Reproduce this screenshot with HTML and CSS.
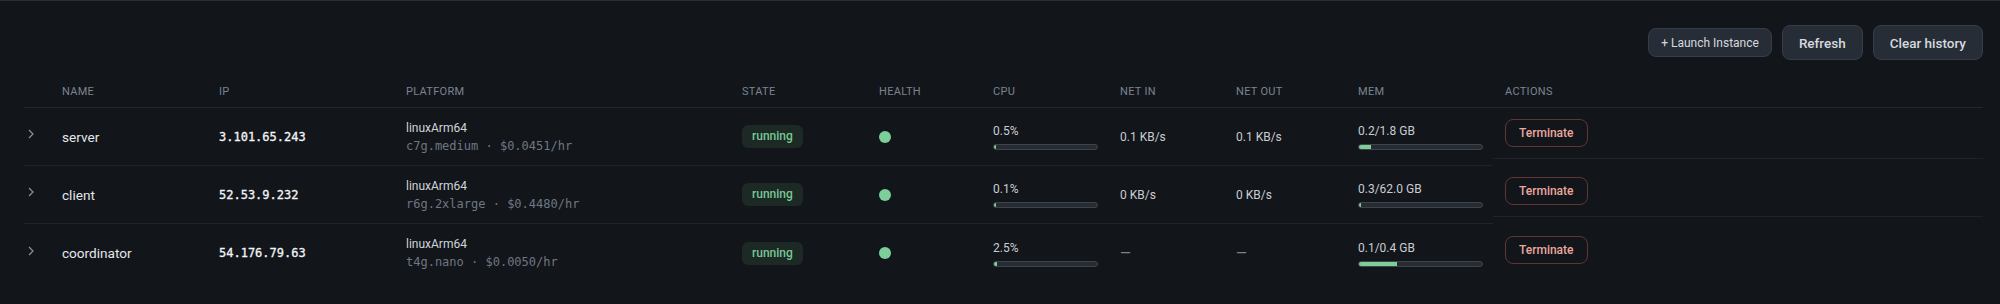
FILE: index.html
```html
<!DOCTYPE html>
<html lang="en">
<head>
  <meta charset="UTF-8">
  <title>Instances</title>
  <link rel="stylesheet" href="styles.css">
</head>
<body>

  <!-- toolbar -->
  <div class="toolbar">
    <button class="btn btn-small">+ Launch Instance</button>
    <button class="btn">Refresh</button>
    <button class="btn">Clear history</button>
  </div>

  <!-- instances table -->
  <div class="table">
    <div class="row head">
      <div class="cell"></div>
      <div class="cell">Name</div>
      <div class="cell">IP</div>
      <div class="cell">Platform</div>
      <div class="cell">State</div>
      <div class="cell">Health</div>
      <div class="cell">CPU</div>
      <div class="cell">Net In</div>
      <div class="cell">Net Out</div>
      <div class="cell">Mem</div>
      <div class="cell">Actions</div>
    </div>

    <div class="row">
      <div class="cell chev"><svg width="8" height="10" viewBox="0 0 8 10"><path d="M2 1l4 4-4 4" fill="none" stroke="#8a929c" stroke-width="1.2"/></svg></div>
      <div class="cell name">server</div>
      <div class="cell ip">3.101.65.243</div>
      <div class="cell platform"><span>linuxArm64</span><span class="sub">c7g.medium · $0.0451/hr</span></div>
      <div class="cell"><span class="badge">running</span></div>
      <div class="cell"><span class="dot"></span></div>
      <div class="cell stat"><span>0.5%</span><div class="bar cpu"><div class="fill" style="width: 0.5%"></div></div></div>
      <div class="cell val">0.1 KB/s</div>
      <div class="cell val">0.1 KB/s</div>
      <div class="cell stat"><span>0.2/1.8 GB</span><div class="bar mem"><div class="fill" style="width: 10%"></div></div></div>
      <div class="cell actions"><button class="terminate">Terminate</button></div>
    </div>

    <div class="row">
      <div class="cell chev"><svg width="8" height="10" viewBox="0 0 8 10"><path d="M2 1l4 4-4 4" fill="none" stroke="#8a929c" stroke-width="1.2"/></svg></div>
      <div class="cell name">client</div>
      <div class="cell ip">52.53.9.232</div>
      <div class="cell platform"><span>linuxArm64</span><span class="sub">r6g.2xlarge · $0.4480/hr</span></div>
      <div class="cell"><span class="badge">running</span></div>
      <div class="cell"><span class="dot"></span></div>
      <div class="cell stat"><span>0.1%</span><div class="bar cpu"><div class="fill" style="width: 0.1%"></div></div></div>
      <div class="cell val">0 KB/s</div>
      <div class="cell val">0 KB/s</div>
      <div class="cell stat"><span>0.3/62.0 GB</span><div class="bar mem"><div class="fill" style="width: 0.5%"></div></div></div>
      <div class="cell actions"><button class="terminate">Terminate</button></div>
    </div>

    <div class="row last">
      <div class="cell chev"><svg width="8" height="10" viewBox="0 0 8 10"><path d="M2 1l4 4-4 4" fill="none" stroke="#8a929c" stroke-width="1.2"/></svg></div>
      <div class="cell name">coordinator</div>
      <div class="cell ip">54.176.79.63</div>
      <div class="cell platform"><span>linuxArm64</span><span class="sub">t4g.nano · $0.0050/hr</span></div>
      <div class="cell"><span class="badge">running</span></div>
      <div class="cell"><span class="dot"></span></div>
      <div class="cell stat"><span>2.5%</span><div class="bar cpu"><div class="fill" style="width: 2.5%"></div></div></div>
      <div class="cell val dash">—</div>
      <div class="cell val dash">—</div>
      <div class="cell stat"><span>0.1/0.4 GB</span><div class="bar mem"><div class="fill" style="width: 31%"></div></div></div>
      <div class="cell actions"><button class="terminate">Terminate</button></div>
    </div>
  </div>

</body>
</html>
```

FILE: styles.css
```css
body {
  margin: 0;
  padding: 0 17px 0 24px;
  background: #12151a;
  border-top: 1px solid #2a2e35;
  font-family: Roboto, 'Liberation Sans', sans-serif;
  color: #e2e5e9;
  height: 303px;
  overflow: hidden;
}

.toolbar {
  display: flex;
  justify-content: flex-end;
  align-items: center;
  gap: 10px;
  padding-top: 24px;
  height: 35px;
}

.btn {
  height: 35px;
  padding: 0 16px;
  font-family: inherit;
  font-size: 13.5px;
  font-weight: 500;
  color: #d5d9df;
  background: #272d36;
  border: 1px solid #363d47;
  border-radius: 8px;
  cursor: pointer;
}

.btn-small {
  height: 29px;
  padding: 0 12px;
  font-size: 12px;
  font-weight: 400;
}

.row {
  display: grid;
  grid-template-columns: 26px 157px 187px 336px 137px 114px 127px 116px 122px 147px 1fr;
  height: 58px;
}

.cell {
  display: flex;
  align-items: center;
  padding-left: 12px;
  border-bottom: 1px solid #1e2329;
  font-size: 12px;
  min-width: 0;
}

.head {
  height: 48px;
}

.head .cell {
  align-items: flex-end;
  padding-bottom: 9px;
  font-size: 11px;
  line-height: 13px;
  letter-spacing: 0.3px;
  text-transform: uppercase;
  color: #7b8490;
  border-bottom-color: #22272e;
}

.row.last .cell {
  border-bottom: none;
}

.chev {
  padding-left: 3px;
}

.chev svg {
  margin-top: -5px;
}

.name {
  font-size: 13.6px;
  color: #e4e7ea;
}

.ip {
  font-family: 'DejaVu Sans Mono', 'Liberation Mono', monospace;
  font-size: 12px;
  color: #f2f4f6;
  -webkit-text-stroke: 0.3px #f2f4f6;
}

.platform {
  flex-direction: column;
  align-items: flex-start;
  justify-content: center;
  line-height: 18px;
  color: #d0d4d9;
}

.platform .sub {
  font-family: 'DejaVu Sans Mono', 'Liberation Mono', monospace;
  font-size: 12px;
  color: #6f7782;
}

.badge {
  padding: 4px 10px;
  line-height: 15px;
  font-weight: 500;
  color: #79c795;
  background: #1c2925;
  border-radius: 6px;
}

.dot {
  width: 12px;
  height: 12px;
  border-radius: 50%;
  background: #7ccf98;
}

.stat {
  flex-direction: column;
  align-items: flex-start;
  justify-content: center;
  gap: 5px;
  line-height: 16px;
  color: #c9cdd3;
}

.bar {
  height: 4px;
  background: #272c33;
  border: 1px solid #3d444e;
  border-radius: 4px;
  overflow: hidden;
}

.bar.cpu { width: 103px; }
.bar.mem { width: 123px; }

.fill {
  height: 100%;
  min-width: 2px;
  background: #7ccf98;
}

.val {
  color: #c9cdd3;
}

.dash {
  font-size: 14px;
  color: #7a828d;
}

.actions {
  margin-bottom: 7px;
}

.terminate {
  height: 28px;
  padding: 0 13px;
  font-family: inherit;
  font-size: 12px;
  font-weight: 500;
  color: #eaa79f;
  background: transparent;
  border: 1px solid #5f3634;
  border-radius: 8px;
  cursor: pointer;
}
```
